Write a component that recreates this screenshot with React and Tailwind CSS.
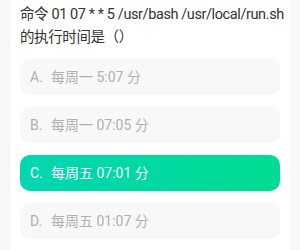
import React from "react";

const options = [
  { k: "A.", t: "每周一 5:07 分" },
  { k: "B.", t: "每周一 07:05 分" },
  { k: "C.", t: "每周五 07:01 分", active: true },
  { k: "D.", t: "每周五 01:07 分" },
];

export default function App() {
  return (
    <div
      className="w-[300px] h-[250px] overflow-hidden bg-[#f7f7f7] px-[10px]"
      style={{ fontFamily: 'Roboto, "Noto Sans CJK SC", sans-serif' }}
    >
      <div className="bg-white h-full px-[10px] pt-[3px]">
        <div className="text-[14.5px] leading-[23px] tracking-[-0.4px] text-[#333] whitespace-nowrap">
          命令 01 07 * * 5 /usr/bash /usr/local/run.sh
          <br />
          的执行时间是（）
        </div>
        <div className="mt-[10px] flex flex-col gap-[12px]">
          {options.map((o) => (
            <div
              key={o.k}
              className={
                o.active
                  ? "h-[36px] rounded-[10px] flex items-center pl-[10px] text-[14px] text-white bg-gradient-to-r from-[#02d6b1] to-[#02db91]"
                  : "h-[36px] rounded-[10px] flex items-center pl-[10px] text-[14px] text-[#b0b0b0] bg-[#f8f8f8]"
              }
            >
              <span className="w-[21px]">{o.k}</span>
              <span>{o.t}</span>
            </div>
          ))}
        </div>
      </div>
    </div>
  );
}
